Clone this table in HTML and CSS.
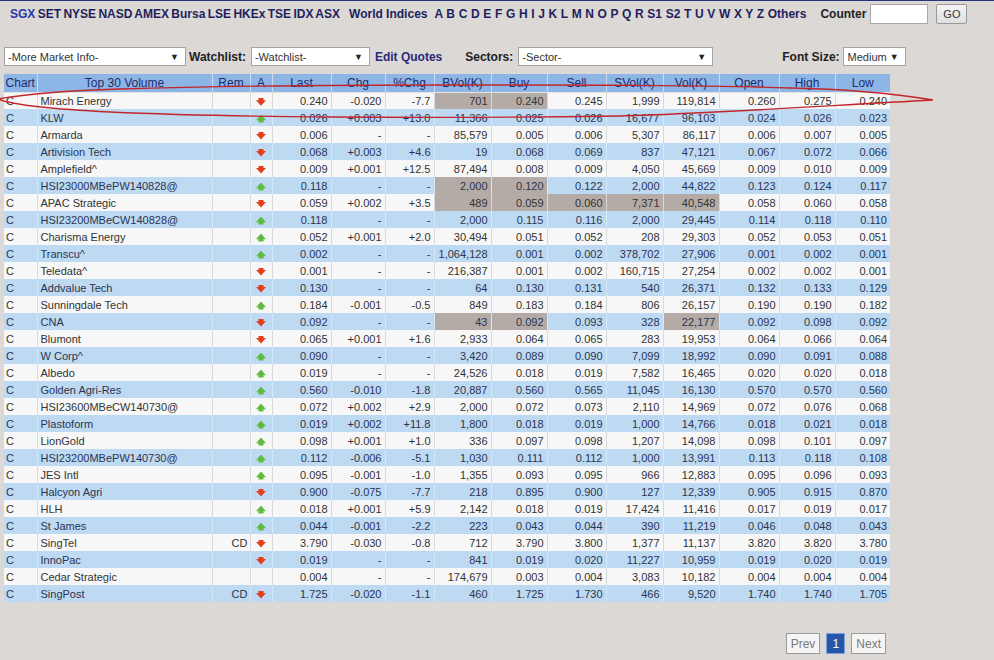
FILE: index.html
```html
<!DOCTYPE html>
<html>
<head>
<meta charset="utf-8">
<link rel="stylesheet" href="styles.css">
</head>
<body>
<div class="page">
  <div class="nav">
    <div class="markets"><a class="cur">SGX</a> <a>SET</a> <a>NYSE</a> <a>NASD</a> <a>AMEX</a> <a>Bursa</a> <a>LSE</a> <a>HKEx</a> <a>TSE</a> <a>IDX</a> <a>ASX</a></div>
    <a class="world">World Indices</a>
    <div class="alpha"><a>A</a> <a>B</a> <a>C</a> <a>D</a> <a>E</a> <a>F</a> <a>G</a> <a>H</a> <a>I</a> <a>J</a> <a>K</a> <a>L</a> <a>M</a> <a>N</a> <a>O</a> <a>P</a> <a>Q</a> <a>R</a> <a>S1</a> <a>S2</a> <a>T</a> <a>U</a> <a>V</a> <a>W</a> <a>X</a> <a>Y</a> <a>Z</a> <a>Others</a></div>
    <span class="counter-label">Counter</span>
    <div class="counter-input"></div>
    <div class="go">GO</div>
  </div>

  <div class="controls">
    <div class="sel sel-more"><span>-More Market Info-</span><span class="caret">▼</span></div>
    <span class="lbl">Watchlist:</span>
    <div class="sel sel-watch"><span>-Watchlist-</span><span class="caret">▼</span></div>
    <a class="edit">Edit Quotes</a>
    <span class="lbl lbl-sectors">Sectors:</span>
    <div class="sel sel-sector"><span>-Sector-</span><span class="caret">▼</span></div>
    <span class="lbl lbl-font">Font Size:</span>
    <div class="sel sel-font"><span>Medium</span><span class="caret">▼</span></div>
  </div>

  <table class="quotes">
    <colgroup>
      <col style="width:33px"><col style="width:175px"><col style="width:38px"><col style="width:22px"><col style="width:59px"><col style="width:54px"><col style="width:49px"><col style="width:57px"><col style="width:56px"><col style="width:59px"><col style="width:57px"><col style="width:56px"><col style="width:60px"><col style="width:56px"><col style="width:55px">
    </colgroup>
    <thead>
      <tr><th>Chart</th><th>Top 30 Volume</th><th>Rem</th><th>A</th><th>Last</th><th>Chg</th><th>%Chg</th><th>BVol(K)</th><th>Buy</th><th>Sell</th><th>SVol(K)</th><th>Vol(K)</th><th>Open</th><th>High</th><th>Low</th></tr>
    </thead>
    <tbody>
      <tr class="w"><td class="c">C</td><td class="n">Mirach Energy</td><td></td><td class="a"><i class="dn"></i></td><td>0.240</td><td>-0.020</td><td>-7.7</td><td class="h">701</td><td class="h">0.240</td><td>0.245</td><td>1,999</td><td>119,814</td><td>0.260</td><td>0.275</td><td>0.240</td></tr>
      <tr class="b"><td class="c">C</td><td class="n">KLW</td><td></td><td class="a"><i class="up"></i></td><td>0.026</td><td>+0.003</td><td>+13.0</td><td>11,366</td><td>0.025</td><td>0.026</td><td>16,677</td><td>96,103</td><td>0.024</td><td>0.026</td><td>0.023</td></tr>
      <tr class="w"><td class="c">C</td><td class="n">Armarda</td><td></td><td class="a"><i class="dn"></i></td><td>0.006</td><td>-</td><td>-</td><td>85,579</td><td>0.005</td><td>0.006</td><td>5,307</td><td>86,117</td><td>0.006</td><td>0.007</td><td>0.005</td></tr>
      <tr class="b"><td class="c">C</td><td class="n">Artivision Tech</td><td></td><td class="a"><i class="dn"></i></td><td>0.068</td><td>+0.003</td><td>+4.6</td><td>19</td><td>0.068</td><td>0.069</td><td>837</td><td>47,121</td><td>0.067</td><td>0.072</td><td>0.066</td></tr>
      <tr class="w"><td class="c">C</td><td class="n">Amplefield^</td><td></td><td class="a"><i class="dn"></i></td><td>0.009</td><td>+0.001</td><td>+12.5</td><td>87,494</td><td>0.008</td><td>0.009</td><td>4,050</td><td>45,669</td><td>0.009</td><td>0.010</td><td>0.009</td></tr>
      <tr class="b"><td class="c">C</td><td class="n">HSI23000MBePW140828@</td><td></td><td class="a"><i class="up"></i></td><td>0.118</td><td>-</td><td>-</td><td class="h">2,000</td><td class="h">0.120</td><td>0.122</td><td>2,000</td><td>44,822</td><td>0.123</td><td>0.124</td><td>0.117</td></tr>
      <tr class="w"><td class="c">C</td><td class="n">APAC Strategic</td><td></td><td class="a"><i class="dn"></i></td><td>0.059</td><td>+0.002</td><td>+3.5</td><td class="h">489</td><td class="h">0.059</td><td class="h">0.060</td><td class="h">7,371</td><td class="h">40,548</td><td>0.058</td><td>0.060</td><td>0.058</td></tr>
      <tr class="b"><td class="c">C</td><td class="n">HSI23200MBeCW140828@</td><td></td><td class="a"><i class="up"></i></td><td>0.118</td><td>-</td><td>-</td><td>2,000</td><td>0.115</td><td>0.116</td><td>2,000</td><td>29,445</td><td>0.114</td><td>0.118</td><td>0.110</td></tr>
      <tr class="w"><td class="c">C</td><td class="n">Charisma Energy</td><td></td><td class="a"><i class="up"></i></td><td>0.052</td><td>+0.001</td><td>+2.0</td><td>30,494</td><td>0.051</td><td>0.052</td><td>208</td><td>29,303</td><td>0.052</td><td>0.053</td><td>0.051</td></tr>
      <tr class="b"><td class="c">C</td><td class="n">Transcu^</td><td></td><td class="a"><i class="up"></i></td><td>0.002</td><td>-</td><td>-</td><td>1,064,128</td><td>0.001</td><td>0.002</td><td>378,702</td><td>27,906</td><td>0.001</td><td>0.002</td><td>0.001</td></tr>
      <tr class="w"><td class="c">C</td><td class="n">Teledata^</td><td></td><td class="a"><i class="dn"></i></td><td>0.001</td><td>-</td><td>-</td><td>216,387</td><td>0.001</td><td>0.002</td><td>160,715</td><td>27,254</td><td>0.002</td><td>0.002</td><td>0.001</td></tr>
      <tr class="b"><td class="c">C</td><td class="n">Addvalue Tech</td><td></td><td class="a"><i class="dn"></i></td><td>0.130</td><td>-</td><td>-</td><td>64</td><td>0.130</td><td>0.131</td><td>540</td><td>26,371</td><td>0.132</td><td>0.133</td><td>0.129</td></tr>
      <tr class="w"><td class="c">C</td><td class="n">Sunningdale Tech</td><td></td><td class="a"><i class="up"></i></td><td>0.184</td><td>-0.001</td><td>-0.5</td><td>849</td><td>0.183</td><td>0.184</td><td>806</td><td>26,157</td><td>0.190</td><td>0.190</td><td>0.182</td></tr>
      <tr class="b"><td class="c">C</td><td class="n">CNA</td><td></td><td class="a"><i class="dn"></i></td><td>0.092</td><td>-</td><td>-</td><td class="h">43</td><td class="h">0.092</td><td>0.093</td><td>328</td><td class="h">22,177</td><td>0.092</td><td>0.098</td><td>0.092</td></tr>
      <tr class="w"><td class="c">C</td><td class="n">Blumont</td><td></td><td class="a"><i class="dn"></i></td><td>0.065</td><td>+0.001</td><td>+1.6</td><td>2,933</td><td>0.064</td><td>0.065</td><td>283</td><td>19,953</td><td>0.064</td><td>0.066</td><td>0.064</td></tr>
      <tr class="b"><td class="c">C</td><td class="n">W Corp^</td><td></td><td class="a"><i class="up"></i></td><td>0.090</td><td>-</td><td>-</td><td>3,420</td><td>0.089</td><td>0.090</td><td>7,099</td><td>18,992</td><td>0.090</td><td>0.091</td><td>0.088</td></tr>
      <tr class="w"><td class="c">C</td><td class="n">Albedo</td><td></td><td class="a"><i class="up"></i></td><td>0.019</td><td>-</td><td>-</td><td>24,526</td><td>0.018</td><td>0.019</td><td>7,582</td><td>16,465</td><td>0.020</td><td>0.020</td><td>0.018</td></tr>
      <tr class="b"><td class="c">C</td><td class="n">Golden Agri-Res</td><td></td><td class="a"><i class="up"></i></td><td>0.560</td><td>-0.010</td><td>-1.8</td><td>20,887</td><td>0.560</td><td>0.565</td><td>11,045</td><td>16,130</td><td>0.570</td><td>0.570</td><td>0.560</td></tr>
      <tr class="w"><td class="c">C</td><td class="n">HSI23600MBeCW140730@</td><td></td><td class="a"><i class="up"></i></td><td>0.072</td><td>+0.002</td><td>+2.9</td><td>2,000</td><td>0.072</td><td>0.073</td><td>2,110</td><td>14,969</td><td>0.072</td><td>0.076</td><td>0.068</td></tr>
      <tr class="b"><td class="c">C</td><td class="n">Plastoform</td><td></td><td class="a"><i class="up"></i></td><td>0.019</td><td>+0.002</td><td>+11.8</td><td>1,800</td><td>0.018</td><td>0.019</td><td>1,000</td><td>14,766</td><td>0.018</td><td>0.021</td><td>0.018</td></tr>
      <tr class="w"><td class="c">C</td><td class="n">LionGold</td><td></td><td class="a"><i class="up"></i></td><td>0.098</td><td>+0.001</td><td>+1.0</td><td>336</td><td>0.097</td><td>0.098</td><td>1,207</td><td>14,098</td><td>0.098</td><td>0.101</td><td>0.097</td></tr>
      <tr class="b"><td class="c">C</td><td class="n">HSI23200MBePW140730@</td><td></td><td class="a"><i class="up"></i></td><td>0.112</td><td>-0.006</td><td>-5.1</td><td>1,030</td><td>0.111</td><td>0.112</td><td>1,000</td><td>13,991</td><td>0.113</td><td>0.118</td><td>0.108</td></tr>
      <tr class="w"><td class="c">C</td><td class="n">JES Intl</td><td></td><td class="a"><i class="up"></i></td><td>0.095</td><td>-0.001</td><td>-1.0</td><td>1,355</td><td>0.093</td><td>0.095</td><td>966</td><td>12,883</td><td>0.095</td><td>0.096</td><td>0.093</td></tr>
      <tr class="b"><td class="c">C</td><td class="n">Halcyon Agri</td><td></td><td class="a"><i class="dn"></i></td><td>0.900</td><td>-0.075</td><td>-7.7</td><td>218</td><td>0.895</td><td>0.900</td><td>127</td><td>12,339</td><td>0.905</td><td>0.915</td><td>0.870</td></tr>
      <tr class="w"><td class="c">C</td><td class="n">HLH</td><td></td><td class="a"><i class="up"></i></td><td>0.018</td><td>+0.001</td><td>+5.9</td><td>2,142</td><td>0.018</td><td>0.019</td><td>17,424</td><td>11,416</td><td>0.017</td><td>0.019</td><td>0.017</td></tr>
      <tr class="b"><td class="c">C</td><td class="n">St James</td><td></td><td class="a"><i class="up"></i></td><td>0.044</td><td>-0.001</td><td>-2.2</td><td>223</td><td>0.043</td><td>0.044</td><td>390</td><td>11,219</td><td>0.046</td><td>0.048</td><td>0.043</td></tr>
      <tr class="w"><td class="c">C</td><td class="n">SingTel</td><td class="r">CD</td><td class="a"><i class="dn"></i></td><td>3.790</td><td>-0.030</td><td>-0.8</td><td>712</td><td>3.790</td><td>3.800</td><td>1,377</td><td>11,137</td><td>3.820</td><td>3.820</td><td>3.780</td></tr>
      <tr class="b"><td class="c">C</td><td class="n">InnoPac</td><td></td><td class="a"><i class="dn"></i></td><td>0.019</td><td>-</td><td>-</td><td>841</td><td>0.019</td><td>0.020</td><td>11,227</td><td>10,959</td><td>0.019</td><td>0.020</td><td>0.019</td></tr>
      <tr class="w"><td class="c">C</td><td class="n">Cedar Strategic</td><td></td><td class="a"></td><td>0.004</td><td>-</td><td>-</td><td>174,679</td><td>0.003</td><td>0.004</td><td>3,083</td><td>10,182</td><td>0.004</td><td>0.004</td><td>0.004</td></tr>
      <tr class="b"><td class="c">C</td><td class="n">SingPost</td><td class="r">CD</td><td class="a"><i class="dn"></i></td><td>1.725</td><td>-0.020</td><td>-1.1</td><td>460</td><td>1.725</td><td>1.730</td><td>466</td><td>9,520</td><td>1.740</td><td>1.740</td><td>1.705</td></tr>
    </tbody>
  </table>

  <div class="pager">
    <span class="pg">Prev</span>
    <span class="pg cur">1</span>
    <span class="pg">Next</span>
  </div>

  <svg class="mark" width="994" height="140" viewBox="0 0 994 140">
    <path d="M933 100 C 890 93, 850 89, 790 88 C 700 85, 600 85, 450 85 C 330 85, 220 86, 120 89 C 60 91, 20 95, -2 99 C 10 104, 50 109, 110 112 C 220 117, 420 119, 620 116 C 720 113, 820 106, 933 100 Z" fill="none" stroke="#c3262a" stroke-width="1.3"/>
  </svg>
</div>
</body>
</html>
```
FILE: styles.css
```css
* { box-sizing: border-box; }
html, body { margin: 0; padding: 0; }
body {
  background: #dbd8d5;
  font-family: "Liberation Sans", Arial, sans-serif;
  color: #333;
  width: 994px;
  height: 660px;
  overflow: hidden;
}
.page { position: relative; height: 660px; border-top: 1px solid #27347a; }
a { text-decoration: none; cursor: pointer; }

.nav {
  display: flex;
  align-items: center;
  height: 25px;
  padding-left: 10px;
  font-size: 12px;
  font-weight: bold;
  color: #1f1f5e;
  white-space: pre;
}
.nav a { color: #1f1f5e; }
.markets { word-spacing: -1px; }
.markets a.cur { color: #2a36b0; }
.world { margin-left: 9px; }
.alpha { margin-left: 7px; word-spacing: 0.3px; }
.counter-label { margin-left: 14px; color: #222; }
.counter-input {
  width: 58px; height: 20px; margin-left: 4px;
  background: #fff; border: 1px solid #a8a8a8;
}
.go {
  width: 31px; height: 20px; margin-left: 8px;
  border: 1px solid #9a9a9a; border-radius: 2px;
  background: linear-gradient(#f4f4f4, #dedede);
  font-weight: normal; font-size: 11px; color: #333;
  display: flex; align-items: center; justify-content: center;
}

.controls {
  display: flex;
  align-items: center;
  height: 19px;
  margin: 21px 0 0 4px;
  font-size: 12px;
}
.sel {
  height: 19px;
  background: #fff;
  border: 1px solid #a5a5a5;
  display: flex;
  align-items: center;
  justify-content: space-between;
  padding: 0 6px 0 3px;
  font-size: 11px;
  color: #333;
}
.caret { font-size: 9px; color: #222; }
.sel-more { width: 182px; }
.sel-watch { width: 119px; margin-left: 5px; }
.sel-sector { width: 195px; margin-left: 5px; }
.sel-font { width: 63px; margin-left: 3px; padding-left: 4px; }
.lbl { font-weight: bold; color: #222; margin-left: 3px; }
.edit { color: #2a2a78; font-weight: bold; margin-left: 5px; }
.lbl-sectors { margin-left: 23px; }
.lbl-font { margin-left: 69px; }

.quotes {
  margin: 8px 0 0 4px;
  border-collapse: collapse;
  table-layout: fixed;
  width: 886px;
  font-size: 11px;
}
.quotes th {
  background: #8db5e6;
  color: #1d2c6c;
  font-weight: normal;
  font-size: 12px;
  height: 18px;
  padding: 0;
  text-align: center;
  border-left: 1px solid #c9dcf3;
  border-bottom: 1px solid #e3e3e3;
}
.quotes th:first-child { border-left: none; }
.quotes td {
  height: 17px;
  padding: 0 3px 0 0;
  text-align: right;
  white-space: nowrap;
  overflow: hidden;
  border-left: 1px solid #d9d9d9;
}
.quotes td:first-child { border-left: none; }
.quotes tr.w td { background: #f7f7f7; color: #333; }
.quotes tr.b td { background: #bed9f2; color: #2a3552; border-left-color: #d6e7f7; }
.quotes td.h, .quotes tr.b td.h, .quotes tr.w td.h { background: #b4aba6; }
.quotes td.c { text-align: left; padding-left: 2px; }
.quotes td.n { text-align: left; padding-left: 3px; }
.quotes td.r { padding-right: 2px; }
.quotes td.a { text-align: center; padding: 0; }

i.up, i.dn {
  display: inline-block;
  width: 10px;
  height: 8px;
  vertical-align: middle;
}
i.dn {
  background: #e2401c;
  clip-path: polygon(25% 0, 75% 0, 75% 30%, 100% 30%, 50% 100%, 0 30%, 25% 30%);
}
i.up {
  background: #5fbb3c;
  clip-path: polygon(50% 0, 100% 70%, 75% 70%, 75% 100%, 25% 100%, 25% 70%, 0 70%);
}

.pager {
  display: flex;
  justify-content: flex-end;
  gap: 6px;
  margin: 31px 108px 0 0;
}
.pg {
  height: 21px;
  padding: 0 4px;
  border: 1px solid #a09a96;
  background: #f5f5f5;
  color: #7a7a7a;
  font-size: 12px;
  display: flex;
  align-items: center;
}
.pg.cur {
  background: #2457a8;
  border-color: #7f9fd8;
  color: #fff;
  width: 19px;
  justify-content: center;
  padding: 0;
}

.mark {
  position: absolute;
  left: 0;
  top: -1px;
  pointer-events: none;
}
```
